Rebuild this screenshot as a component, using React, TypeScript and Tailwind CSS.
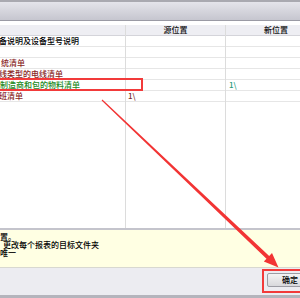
import React from "react";

const font = { fontFamily: '"Noto Sans CJK SC", "Noto Sans", sans-serif' };

type Row = { c1: string; c1Cls: string; c2?: string; c2Cls?: string; c3?: string; c3Cls?: string };

const rows: Row[] = [
  { c1: "备说明及设备型号说明", c1Cls: "text-[#000] ml-[-1px]" },
  { c1: "", c1Cls: "" },
  { c1: "统清单", c1Cls: "text-[#8a1f1f] ml-[1px]" },
  { c1: "线类型的电线清单", c1Cls: "text-[#8a1f1f] ml-[-1px]" },
  { c1: "制造商和包的物料清单", c1Cls: "text-[#218a21] ml-[0px]", c3: "1\\", c3Cls: "text-[#2a9a7a]" },
  { c1: "班清单", c1Cls: "text-[#8a1f1f] ml-[-1px]", c2: "1\\", c2Cls: "text-[#7a2a2a]" },
];

export default function App() {
  return (
    <div
      className="relative w-[300px] h-[298px] overflow-hidden bg-white flex flex-col text-[8px] leading-[8px] font-medium"
      style={font}
    >
      {/* toolbar */}
      <div className="h-[21px] shrink-0 border-t-[2px] border-t-[#a9a9b0] border-b border-b-[#9a9aa4] bg-gradient-to-b from-[#e4e4ea] to-[#c6c6cf]" />
      <div className="h-[4px] shrink-0 bg-white" />

      {/* table */}
      <div className="flex-1 flex min-h-0">
        <div className="w-[126px] shrink-0 border-r border-[#dcdcdc] flex flex-col">
          <div className="h-[11px] shrink-0 bg-[#eeeef3] border-b border-[#d4d4da]" />
          {rows.map((r, i) => (
            <div key={i} className="h-[11px] shrink-0 border-b border-[#e6e6e6] flex items-center whitespace-nowrap overflow-hidden">
              <span className={r.c1Cls}>{r.c1}</span>
            </div>
          ))}
        </div>
        <div className="w-[100px] shrink-0 border-r border-[#dcdcdc] flex flex-col">
          <div className="h-[11px] shrink-0 bg-[#eeeef3] border-b border-[#d4d4da] flex items-center justify-center text-[#111]">
            源位置
          </div>
          {rows.map((r, i) => (
            <div key={i} className="h-[11px] shrink-0 border-b border-[#e6e6e6] flex items-center pl-[2px] whitespace-nowrap">
              <span className={r.c2Cls}>{r.c2 ?? ""}</span>
            </div>
          ))}
        </div>
        <div className="w-[100px] shrink-0 flex flex-col">
          <div className="h-[11px] shrink-0 bg-[#eeeef3] border-b border-[#d4d4da] flex items-center justify-center text-[#111]">
            新位置
          </div>
          {rows.map((r, i) => (
            <div key={i} className="h-[11px] shrink-0 border-b border-[#e6e6e6] flex items-center pl-[3px] whitespace-nowrap">
              <span className={r.c3Cls}>{r.c3 ?? ""}</span>
            </div>
          ))}
        </div>
      </div>

      {/* info panel */}
      <div className="h-[40px] shrink-0 border-t-[2px] border-t-[#c4c4cc] border-b border-b-[#d8d8d0] bg-[#ffffe3] pt-[3px] text-[#000] flex flex-col whitespace-nowrap">
        <div className="h-[8px] leading-[8px]">置。</div>
        <div className="h-[8px] leading-[8px] ml-[-5px]">）更改每个报表的目标文件夹</div>
        <div className="h-[8px] leading-[8px]">唯一</div>
      </div>

      {/* button bar */}
      <div className="h-[27px] shrink-0 bg-[#ececf1] flex items-start justify-end pt-[5px] pr-0">
        <div className="w-[46px] h-[14px] mr-[-13px] border border-[#9c9ca4] rounded-[2px] bg-gradient-to-b from-[#f4f4f4] to-[#d8d8dc] flex items-center justify-center text-[#000]">
          确定
        </div>
      </div>
      <div className="h-[3px] shrink-0 bg-[#b4b4bc]" />

      {/* annotations */}
      <div className="absolute left-[-3px] top-[78px] w-[146px] h-[13px] border-2 border-[#f23a3a]" />
      <div className="absolute left-[262px] top-[269px] w-[42px] h-[24px] border-2 border-[#f23a3a]" />
      <svg className="absolute left-0 top-0" width="300" height="298" viewBox="0 0 300 298">
        <polygon
          points="101.6,100.4 266.5,258.7 263.8,261.6 278.5,267.5 272,253 269.2,256.0 102.4,99.6"
          fill="#f23434"
        />
      </svg>
    </div>
  );
}
